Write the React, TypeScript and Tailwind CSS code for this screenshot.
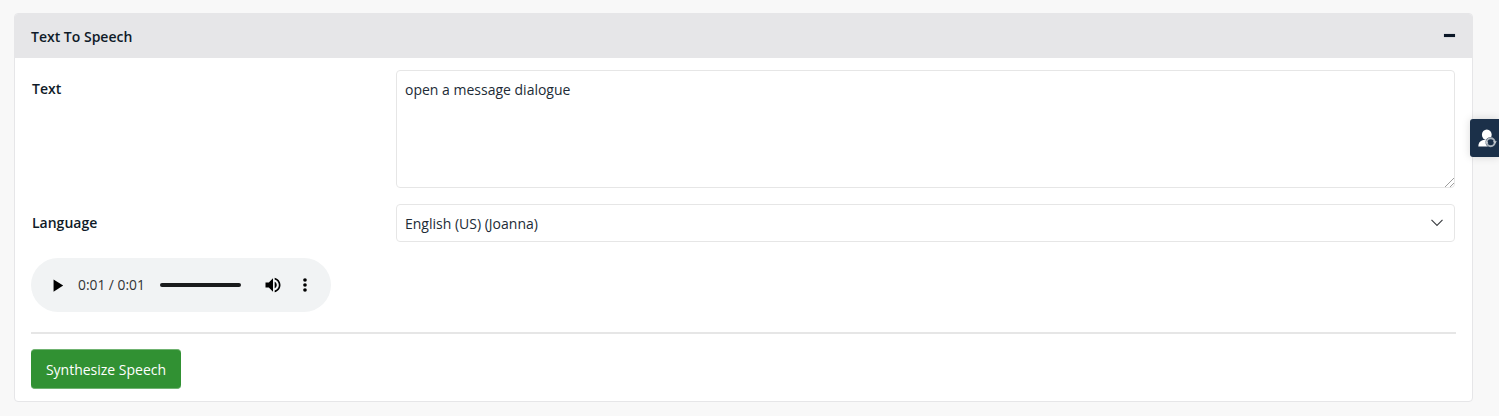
import { useState } from "react";

const FONT = "font-['Open_Sans','Noto_Sans',sans-serif]";

function AudioPlayer() {
  return (
    <div className="flex h-[54px] w-[300px] items-center rounded-full bg-[#f1f3f4] pl-[16px] text-black">
      <svg width="21" height="21" viewBox="0 0 24 24" fill="currentColor" aria-hidden="true">
        <path d="M7.500 5v14l11-7z" />
      </svg>
      <span className="ml-[10px] w-[82px] whitespace-nowrap text-[13.800px] leading-5 text-[#303335]">0:01 / 0:01</span>
      <div className="h-1 w-[81px] rounded-full bg-[#191b1c]" />
      <svg className="ml-[22px]" width="20" height="20" viewBox="0 0 24 24" fill="currentColor" aria-hidden="true">
        <path d="M3 9v6h4l5 5V4L7 9H3zm13.500 3c0-1.770-1.020-3.290-2.500-4.030v8.050c1.480-.730 2.500-2.250 2.500-4.020zM14 3.230v2.060c2.890.860 5 3.540 5 6.710s-2.110 5.850-5 6.710v2.060c4.010-.910 7-4.490 7-8.770s-2.990-7.860-7-8.770z" />
      </svg>
      <svg className="ml-[12px]" width="20" height="20" viewBox="0 0 24 24" fill="currentColor" aria-hidden="true">
        <circle cx="12" cy="6" r="2.200" />
        <circle cx="12" cy="12" r="2.200" />
        <circle cx="12" cy="18" r="2.200" />
      </svg>
    </div>
  );
}

function AgentTab() {
  return (
    <button
      aria-label="Switch user"
      className="absolute top-[119px] right-0 flex h-[38px] w-[29px] items-center rounded-l-[3px] bg-[#1b3049] pl-2 shadow-[0_0_8px_rgba(0,0,0,0.15)]"
    >
      <svg width="19" height="19" viewBox="0 0 19 19" aria-hidden="true">
        <ellipse cx="8.800" cy="5.800" rx="4.900" ry="5.200" fill="#fff" />
        <path d="M.3 17.500c0-3.500 1.500-5.600 4.700-6.500h7v6.500z" fill="#fff" />
        <circle cx="12.700" cy="13.200" r="5.200" fill="#1b3049" />
        <circle cx="12.700" cy="13.200" r="4" fill="none" stroke="#aab3bc" strokeWidth="1.900" />
        <path d="M15 12.200h3.800l-1.800 2.500zM10.400 14.200H6.600l1.800-2.500z" fill="#c5cbd1" />
      </svg>
    </button>
  );
}

export default function App() {
  const [text, setText] = useState("open a message dialogue");

  return (
    <div className={`${FONT} relative h-[416px] overflow-hidden bg-[#f8f8f8] pt-[13px] pl-[14px] text-[14px] text-[#0f1b28]`}>
      <section className="h-[388.500px] w-[1459px] overflow-hidden rounded-[4px] border border-[#e6e6e8] bg-white">
        <header className="flex h-11 items-center justify-between bg-[#e6e6e8] pr-[17px] pl-4">
          <h2 className="pt-0.5 text-[14px] leading-5 font-semibold">Text To Speech</h2>
          <button aria-label="Collapse" className="mb-px h-[3px] w-[11px] bg-[#0b1727] shadow-[0_0_1px_rgba(11,23,39,0.6)]" />
        </header>
        <div className="px-4 pt-3">
          <div className="flex h-[118px]">
            <label htmlFor="text" className="w-[365px] pt-[9px] pl-px leading-5 font-semibold">Text</label>
            <div className="relative h-[118px] w-[1059px]">
              <textarea
                id="text"
                value={text}
                onChange={(e) => setText(e.target.value)}
                className="block h-full w-full resize-none rounded-[4px] border border-[#e6e6e6] bg-white px-2 py-2 leading-[21px] text-[#212b36] outline-none"
              />
              <svg className="pointer-events-none absolute right-px bottom-px" width="9" height="9" viewBox="0 0 9 9" fill="none" stroke="#858585" strokeWidth=".8" aria-hidden="true">
                <path d="M0 9l9-9M5 9l4-4" />
              </svg>
            </div>
          </div>
          <div className="mt-4 flex h-[38px]">
            <span className="w-[365px] pt-[9px] pl-px leading-5 font-semibold">Language</span>
            <button className="flex w-[1059px] items-center justify-between rounded-[4px] border border-[#e6e6e6] bg-white pr-[11px] pl-2 text-[#212b36]">
              <span className="leading-[21px]">English (US) (Joanna)</span>
              <svg width="12" height="8" viewBox="0 0 12 8" fill="none" stroke="#3f4246" strokeWidth="1.200" aria-hidden="true">
                <path d="M.5.800l5.500 5.500L11.500.800" />
              </svg>
            </button>
          </div>
          <div className="mt-4">
            <AudioPlayer />
          </div>
          <hr className="mt-5 h-[2px] w-[1425px] border-0 bg-[#e6e6e6]" />
          <button className="mt-[15px] h-10 w-[150px] rounded-[4px] border-y border-[#70b371] bg-[#319133] pt-px leading-5 text-white">
            Synthesize Speech
          </button>
        </div>
      </section>
      <AgentTab />
    </div>
  );
}
